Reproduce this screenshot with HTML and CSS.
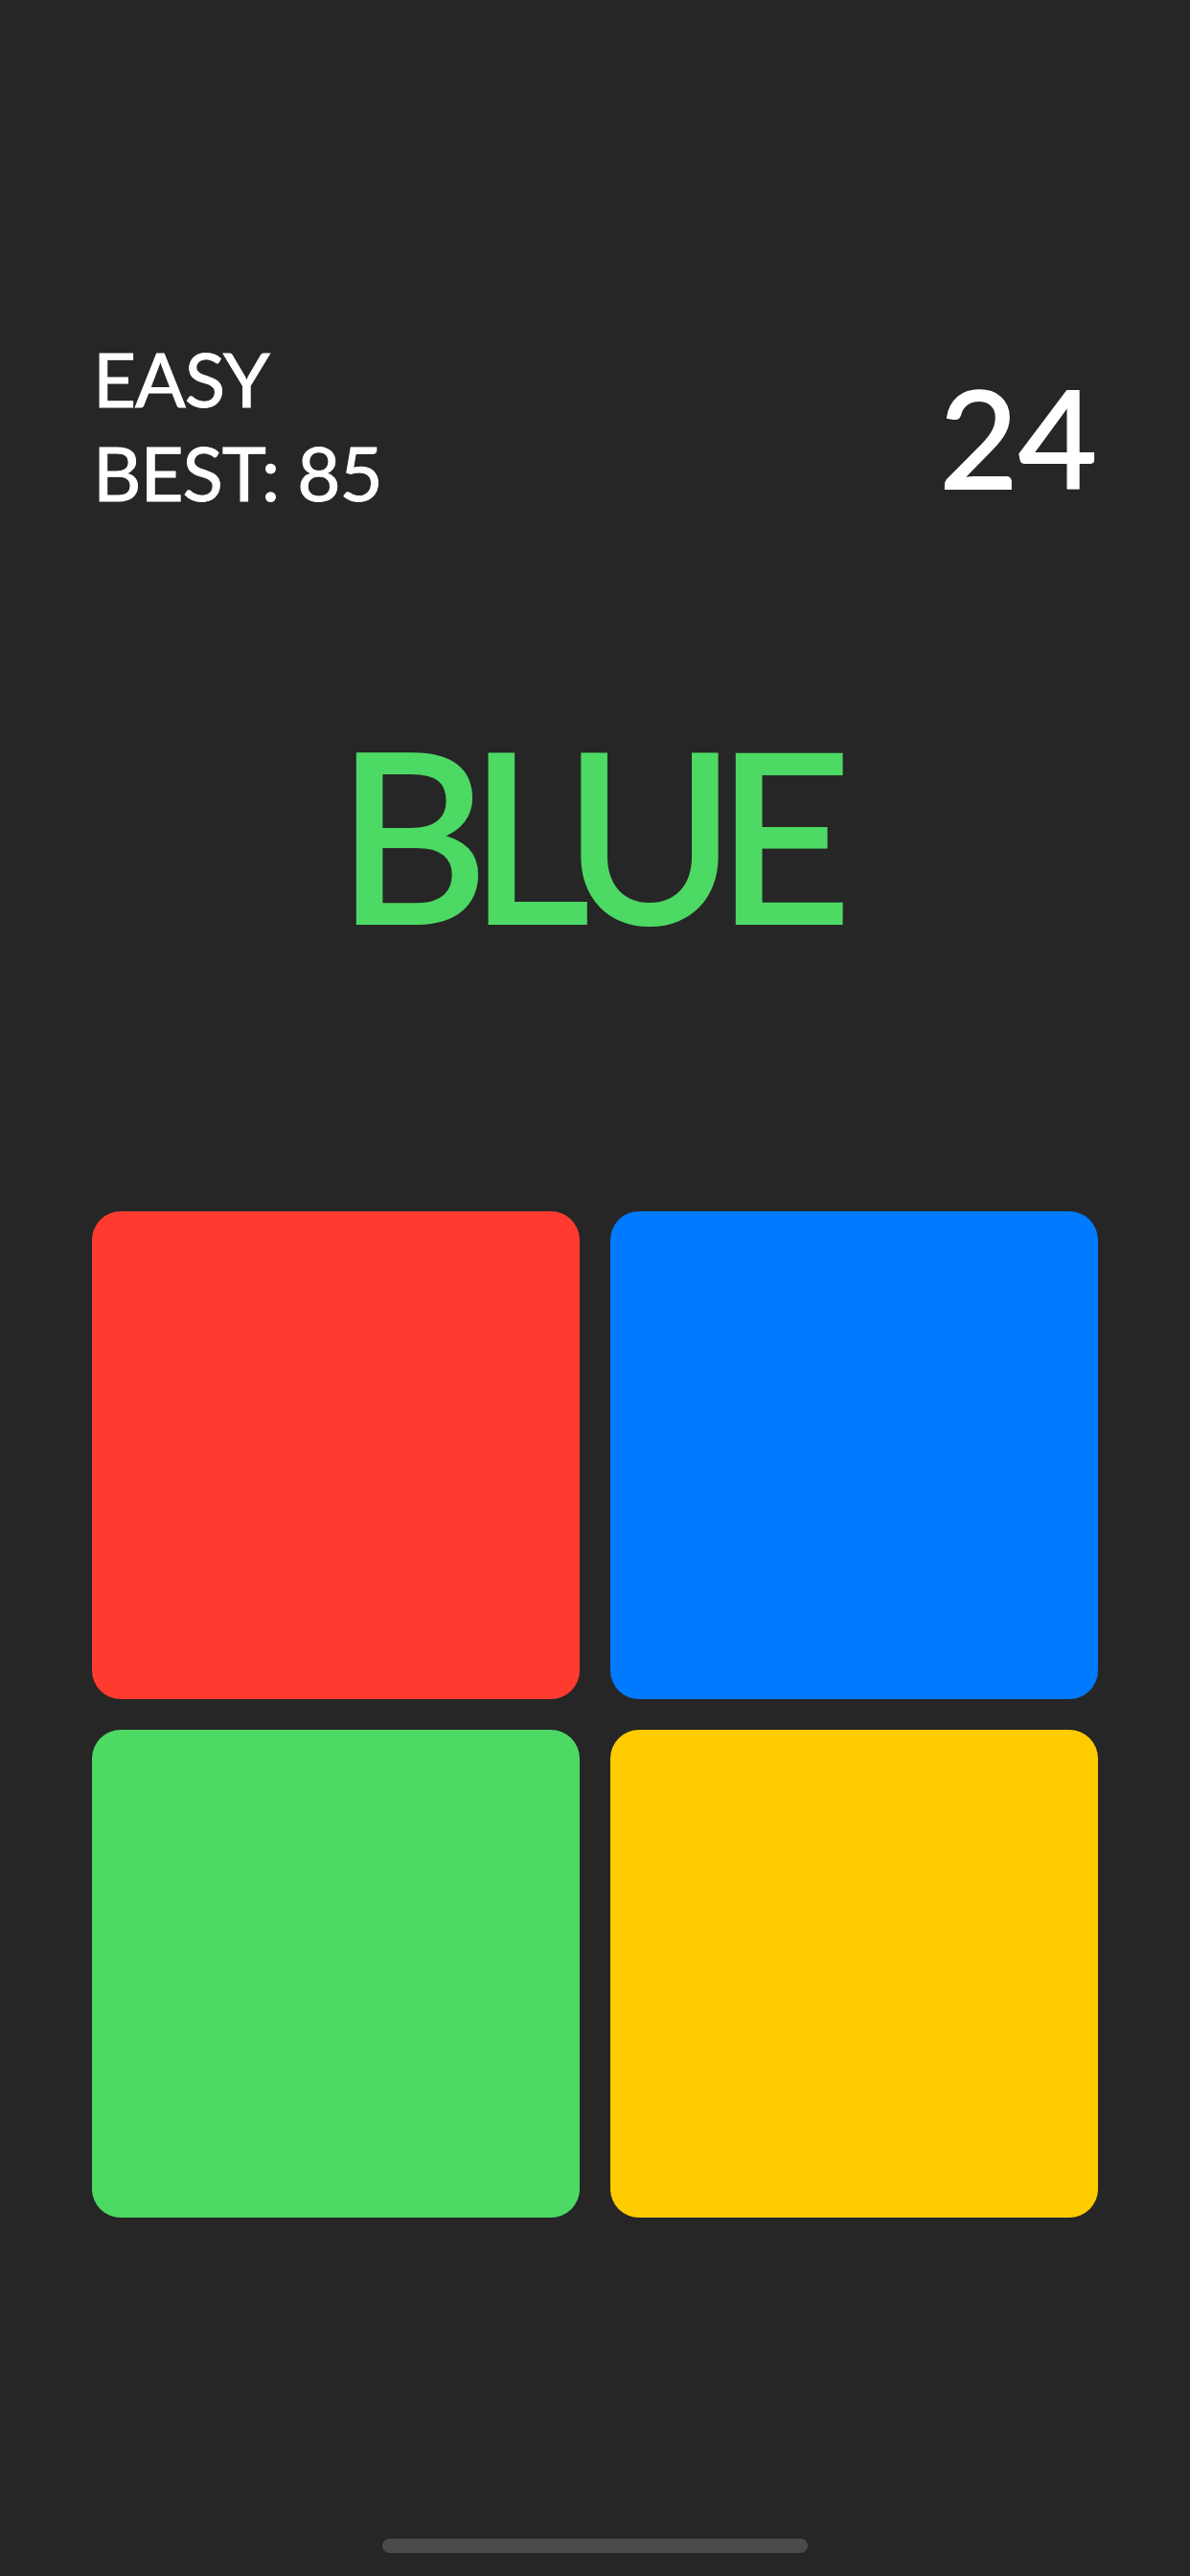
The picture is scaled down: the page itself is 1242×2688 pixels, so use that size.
FILE: index.html
```html
<!DOCTYPE html>
<html>
<head>
<meta charset="utf-8">
<link rel="stylesheet" href="styles.css">
</head>
<body>
<div class="screen">
  <header class="top">
    <div class="info">
      <div class="line">EASY</div>
      <div class="line">BEST: 85</div>
    </div>
    <div class="score">24</div>
  </header>
  <div class="word">BLUE</div>
  <div class="grid">
    <div class="tile red"></div>
    <div class="tile blue"></div>
    <div class="tile green"></div>
    <div class="tile yellow"></div>
  </div>
  <div class="home"></div>
</div>
</body>
</html>
```
FILE: styles.css
```css
html, body {
  margin: 0;
  padding: 0;
  background: #262626;
}
.screen {
  width: 1242px;
  height: 2688px;
  display: flex;
  flex-direction: column;
  font-family: "Lato", "Noto Sans", sans-serif;
  color: #ffffff;
  box-sizing: border-box;
  padding: 0 96px;
}
.top {
  display: flex;
  justify-content: space-between;
  align-items: flex-start;
  padding-top: 346px;
  padding-left: 1px;
  padding-right: 1px;
}
.line {
  font-size: 78px;
  line-height: 98px;
  font-weight: 400;
  letter-spacing: -1px;
  -webkit-text-stroke: 1px #ffffff;
}
.score {
  font-size: 142px;
  line-height: 150px;
  margin-top: 34px;
  font-weight: 400;
  -webkit-text-stroke: 2px #ffffff;
}
.word {
  text-align: center;
  color: #4cd964;
  font-size: 244px;
  line-height: 250px;
  margin-top: 202px;
  letter-spacing: -20px;
  padding-right: 22px;
  -webkit-text-stroke: 4px #4cd964;
}
.grid {
  display: grid;
  grid-template-columns: 509px 509px;
  grid-template-rows: 509px 509px;
  gap: 32px;
  margin-top: 270px;
}
.tile {
  border-radius: 30px;
}
.red { background: #ff3b30; }
.blue { background: #007aff; }
.green { background: #4cd964; }
.yellow { background: #ffcc00; }
.home {
  width: 444px;
  height: 15px;
  border-radius: 8px;
  background: #4a4a4a;
  align-self: center;
  margin-top: auto;
  margin-bottom: 24px;
}
```
